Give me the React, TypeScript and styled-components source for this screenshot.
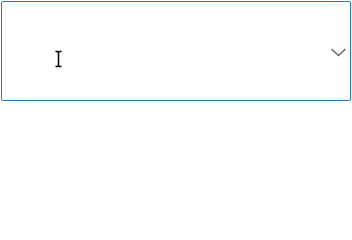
import styled, { createGlobalStyle } from "styled-components";

const GlobalStyle = createGlobalStyle`
  html, body {
    margin: 0;
    padding: 0;
    background: #ffffff;
    font-family: "Segoe UI", "Noto Sans", "Liberation Sans", sans-serif;
  }
`;

const Page = styled.div`
  padding: 1px;
  width: 352px;
  box-sizing: border-box;
`;

const SelectBox = styled.div`
  position: relative;
  box-sizing: border-box;
  width: 350px;
  height: 100px;
  border: 1px solid #2a7ab0;
  border-radius: 2px;
  background: #ffffff;
  display: flex;
  align-items: center;
  justify-content: flex-end;
  padding-right: 3px;
`;

const Chevron = styled.svg`
  width: 17px;
  height: 10px;
  margin-top: 2px;
`;

const Cursor = styled.svg`
  position: absolute;
  left: 52px;
  top: 48px;
  width: 9px;
  height: 18px;
`;

export default function App() {
  return (
    <>
      <GlobalStyle />
      <Page>
        <SelectBox>
          <Chevron viewBox="0 0 17 10">
            <path d="M1.5 2 L8.5 8.5 L15.5 2" fill="none" stroke="#5f5f5f" strokeWidth="1.3" />
          </Chevron>
          <Cursor viewBox="0 0 9 18">
            <path
              d="M1.5 1.5 H3.5 L4.5 2.5 L5.5 1.5 H7.5 M4.5 2.5 V15.5 M1.5 16.5 H3.5 L4.5 15.5 L5.5 16.5 H7.5"
              fill="none"
              stroke="#000000"
              strokeWidth="1.5"
            />
          </Cursor>
        </SelectBox>
      </Page>
    </>
  );
}
